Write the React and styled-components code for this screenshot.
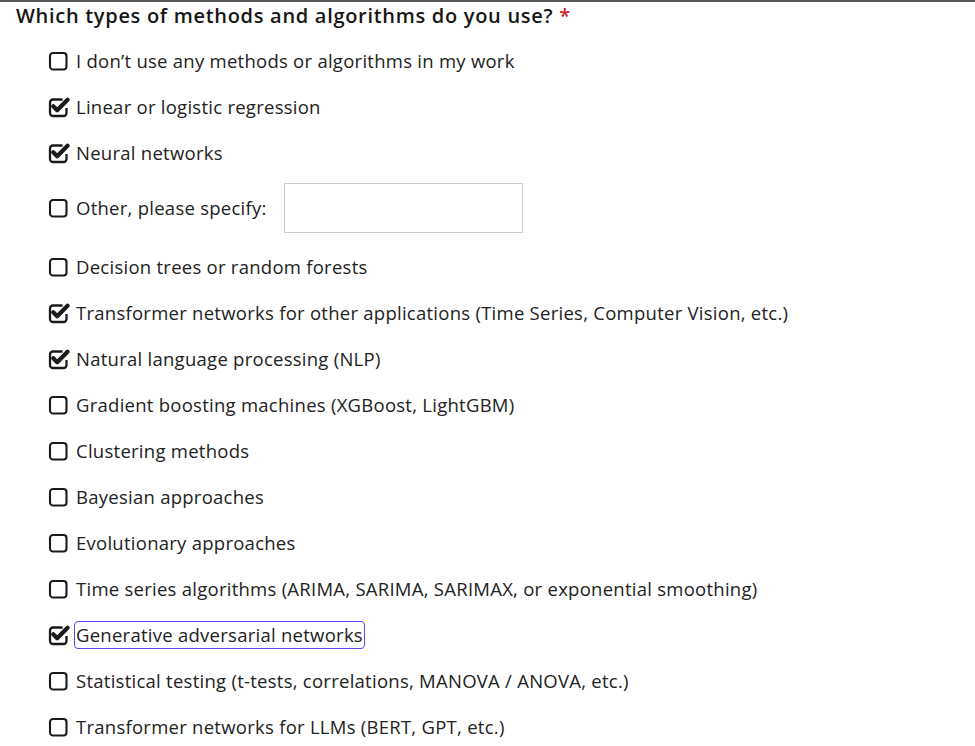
import React from "react";
import styled, { createGlobalStyle } from "styled-components";

const GlobalStyle = createGlobalStyle`
  body {
    margin: 0;
    background: #ffffff;
    font-family: "Open Sans", "Noto Sans", sans-serif;
    color: #212529;
  }
`;

const Page = styled.div`
  border-top: 2px solid #585858;
  min-height: 744px;
`;

const Title = styled.h2`
  margin: 0;
  padding-left: 16px;
  height: 28px;
  line-height: 28px;
  font-size: 20px;
  font-weight: 600;
  color: #161616;
  letter-spacing: 0.7px;
`;

const Star = styled.span`
  color: #d0242b;
  margin-left: 6px;
`;

const List = styled.div`
  margin-top: 8px;
  padding-left: 48px;
  display: flex;
  flex-direction: column;
`;

const Row = styled.label`
  display: flex;
  align-items: center;
  height: ${(p) => (p.$tall ? "68px" : "46px")};
  padding: ${(p) => (p.$tall ? "7px 0 11px" : "0")};
  box-sizing: border-box;
`;

const Inner = styled.div`
  display: flex;
  align-items: center;
  height: 50px;
`;

const Box = styled.svg`
  flex: none;
  width: 22px;
  height: 22px;
  margin-right: 6px;
`;

const Text = styled.span`
  font-size: 18.5px;
  letter-spacing: 0.26px;
  color: #222;
  padding: 0 1px 1px;
  border: 1.5px solid ${(p) => (p.$focus ? "#5a48f5" : "transparent")};
  border-radius: 4px;
  margin-left: -2px;
`;

const SpecifyInput = styled.div`
  width: 237px;
  height: 48px;
  border: 1px solid #cccccc;
  margin-left: 15px;
  background: #fff;
`;

function CheckBox({ checked }) {
  return (
    <Box viewBox="0 0 22 22">
      {checked ? (
        <>
          <path
            d="M14.5 3.5 H5 a3 3 0 0 0 -3 3 V17 a3 3 0 0 0 3 3 H15.5 a3 3 0 0 0 3 -3 V12"
            fill="none"
            stroke="#1a1a1a"
            strokeWidth="2.3"
          />
          <path
            d="M5.3 10.3 L9.2 14.2 L19.5 3.8"
            fill="none"
            stroke="#1a1a1a"
            strokeWidth="4.2"
            strokeLinecap="round"
            strokeLinejoin="round"
          />
        </>
      ) : (
        <rect
          x="2"
          y="3"
          width="16.5"
          height="16.5"
          rx="3"
          fill="none"
          stroke="#1a1a1a"
          strokeWidth="2.1"
        />
      )}
    </Box>
  );
}

const options = [
  { label: "I don’t use any methods or algorithms in my work" },
  { label: "Linear or logistic regression", checked: true },
  { label: "Neural networks", checked: true },
  { label: "Other, please specify:", other: true },
  { label: "Decision trees or random forests" },
  {
    label:
      "Transformer networks for other applications (Time Series, Computer Vision, etc.)",
    checked: true,
  },
  { label: "Natural language processing (NLP)", checked: true },
  { label: "Gradient boosting machines (XGBoost, LightGBM)" },
  { label: "Clustering methods" },
  { label: "Bayesian approaches" },
  { label: "Evolutionary approaches" },
  {
    label:
      "Time series algorithms (ARIMA, SARIMA, SARIMAX, or exponential smoothing)",
  },
  { label: "Generative adversarial networks", checked: true, focus: true },
  {
    label: "Statistical testing (t-tests, correlations, MANOVA / ANOVA, etc.)",
  },
  { label: "Transformer networks for LLMs (BERT, GPT, etc.)" },
];

export default function App() {
  return (
    <Page>
      <GlobalStyle />
      <Title>
        Which types of methods and algorithms do you use?<Star>*</Star>
      </Title>
      <List>
        {options.map((o) =>
          o.other ? (
            <Row key={o.label} $tall>
              <Inner>
                <CheckBox checked={o.checked} />
                <Text>{o.label}</Text>
                <SpecifyInput />
              </Inner>
            </Row>
          ) : (
            <Row key={o.label}>
              <CheckBox checked={o.checked} />
              <Text $focus={o.focus}>{o.label}</Text>
            </Row>
          )
        )}
      </List>
    </Page>
  );
}
